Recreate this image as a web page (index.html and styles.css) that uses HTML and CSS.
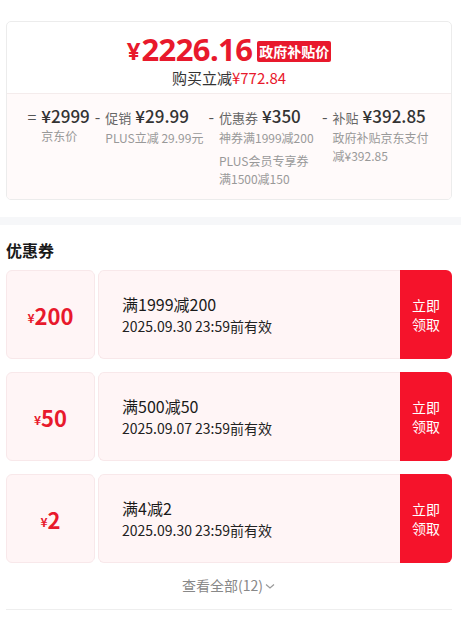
FILE: index.html
```html
<!DOCTYPE html>
<html lang="zh-CN">
<head>
<meta charset="UTF-8" />
<title>价格明细</title>
<link rel="stylesheet" href="styles.css">
</head>
<body>

<div class="topo">
  <div class="cartao">
    <div class="cabeca">
      <div class="preco">
        <span class="moeda">¥</span><span class="valor">2226.16</span>
        <span class="selo">政府补贴价</span>
      </div>
      <div class="economia">购买立减<em>¥772.84</em></div>
    </div>

    <div class="detalhe">
      <div class="item">
        <span class="sinal">=</span>
        <div class="coluna">
          <div class="linha-valor"><b>¥2999</b></div>
          <div class="desc">京东价</div>
        </div>
      </div>
      <div class="item">
        <span class="sinal">-</span>
        <div class="coluna">
          <div class="linha-valor"><span class="rotulo">促销</span><b>¥29.99</b></div>
          <div class="desc inteira">PLUS立减 29.99元</div>
        </div>
      </div>
      <div class="item">
        <span class="sinal">-</span>
        <div class="coluna">
          <div class="linha-valor"><span class="rotulo">优惠券</span><b>¥350</b></div>
          <div class="desc">神券满1999减200</div>
          <div class="desc">PLUS会员专享券满1500减150</div>
        </div>
      </div>
      <div class="item">
        <span class="sinal">-</span>
        <div class="coluna">
          <div class="linha-valor"><span class="rotulo">补贴</span><b>¥392.85</b></div>
          <div class="desc">政府补贴京东支付减¥392.85</div>
        </div>
      </div>
    </div>
  </div>
</div>

<div class="separador"></div>

<div class="cupons">
  <h3>优惠券</h3>
  <div id="listaCupons">
    <!-- cupons gerados via JS -->
  </div>
  <div class="ver-todos">查看全部(12)<svg width="12" height="12" viewBox="0 0 12 12"><path d="M2 4.5 L6 8 L10 4.5" fill="none" stroke="#999" stroke-width="1.2"/></svg></div>
</div>

<script>
  // lista de cupons
  const cupons = [
    { valor: '200', regra: '满1999减200', prazo: '2025.09.30 23:59前有效' },
    { valor: '50', regra: '满500减50', prazo: '2025.09.07 23:59前有效' },
    { valor: '2', regra: '满4减2', prazo: '2025.09.30 23:59前有效' }
  ];
  const lista = document.getElementById('listaCupons');
  cupons.forEach(c => {
    const div = document.createElement('div');
    div.className = 'cupom';
    div.innerHTML = `
      <div class="canhoto"><span class="c-moeda">¥</span>${c.valor}</div>
      <div class="corpo">
        <div class="regra">${c.regra}</div>
        <div class="prazo">${c.prazo}</div>
      </div>
      <div class="botao">立即<br>领取</div>
    `;
    lista.appendChild(div);
  });
</script>

</body>
</html>
```

FILE: styles.css
```css
body {
  margin: 0;
  font-family: "Noto Sans CJK SC", "Noto Sans", sans-serif;
  background-color: #fff;
  color: #1a1a1a;
}
.topo {
  padding: 21px 9px 17px 6px;
}
.cartao {
  border: 1px solid #ececec;
  border-radius: 5px;
  overflow: hidden;
}
.cabeca {
  padding: 9px 0 5px;
  text-align: center;
  border-bottom: 1px solid #f4ecec;
}
.preco {
  height: 36px;
  margin-bottom: 1px;
  display: flex;
  align-items: center;
  justify-content: center;
  color: #e8192c;
  font-family: "Noto Sans", sans-serif;
  font-weight: 700;
  line-height: 1;
}
.moeda {
  font-size: 24px;
  margin-top: 4px;
  margin-right: 1px;
}
.valor {
  font-size: 31px;
  letter-spacing: -0.6px;
}
.selo {
  margin-left: 5px;
  margin-top: 4px;
  background-color: #e8192c;
  color: #fff;
  font-family: "Noto Sans CJK SC", sans-serif;
  font-size: 14px;
  line-height: 21px;
  padding: 0 2px;
  border-radius: 2px;
}
.economia {
  font-size: 15px;
  line-height: 20px;
  color: #333;
}
.economia em {
  font-style: normal;
  color: #e8192c;
}
.detalhe {
  background-color: #fffafa;
  display: flex;
  justify-content: center;
  gap: 5px;
  padding: 11px 0 11px;
}
.item {
  display: flex;
  gap: 5px;
}
.sinal {
  font-size: 16px;
  line-height: 22px;
  color: #555;
}
.linha-valor {
  line-height: 22px;
  white-space: nowrap;
}
.linha-valor b {
  font-size: 17px;
  font-weight: 500;
  color: #333;
}
.rotulo {
  font-size: 13px;
  color: #666;
  margin-right: 4px;
}
.desc {
  font-size: 12px;
  line-height: 18px;
  color: #999;
  max-width: 98px;
}
.desc.inteira {
  max-width: none;
  white-space: nowrap;
}
.desc + .desc {
  margin-top: 5px;
}
.separador {
  height: 8px;
  background-color: #f6f7f9;
}
.cupons {
  padding: 14px 9px 0 6px;
}
h3 {
  margin: 0 0 9px;
  font-size: 16px;
  line-height: 22px;
  font-weight: 700;
}
.cupom {
  position: relative;
  display: flex;
  height: 89px;
  margin-bottom: 13px;
}
.cupom::before, .cupom::after {
  content: "";
  position: absolute;
  left: 87px;
  width: 7px;
  height: 7px;
  border-radius: 50%;
  background-color: #fff;
}
.cupom::before {
  top: -3px;
}
.cupom::after {
  bottom: -3px;
}
.canhoto {
  width: 87px;
  border: 1px solid #f8e8ea;
  border-radius: 6px;
  background-color: #fff5f6;
  display: flex;
  align-items: center;
  justify-content: center;
  color: #e8192c;
  font-size: 22px;
  font-weight: 700;
}
.c-moeda {
  font-size: 12px;
  margin-top: 5px;
}
.corpo {
  flex: 1;
  margin-left: 3px;
  border: 1px solid #f8e8ea;
  border-right: none;
  border-radius: 6px 0 0 6px;
  background-color: #fff5f6;
  padding-left: 23px;
  display: flex;
  flex-direction: column;
  justify-content: center;
}
.regra {
  font-size: 16px;
  line-height: 22px;
  color: #1a1a1a;
}
.prazo {
  font-size: 14px;
  line-height: 22px;
  color: #222;
}
.botao {
  width: 52px;
  background-color: #f5132b;
  color: #fff;
  border-radius: 0 6px 6px 0;
  font-size: 14px;
  line-height: 19px;
  display: flex;
  align-items: center;
  justify-content: center;
  text-align: center;
}
.ver-todos {
  margin-top: -1px;
  padding-bottom: 14px;
  border-bottom: 1px solid #eeeeee;
  text-align: center;
  font-size: 14px;
  line-height: 20px;
  color: #888;
}
.ver-todos svg {
  margin-left: 1px;
  vertical-align: -1px;
}
```
